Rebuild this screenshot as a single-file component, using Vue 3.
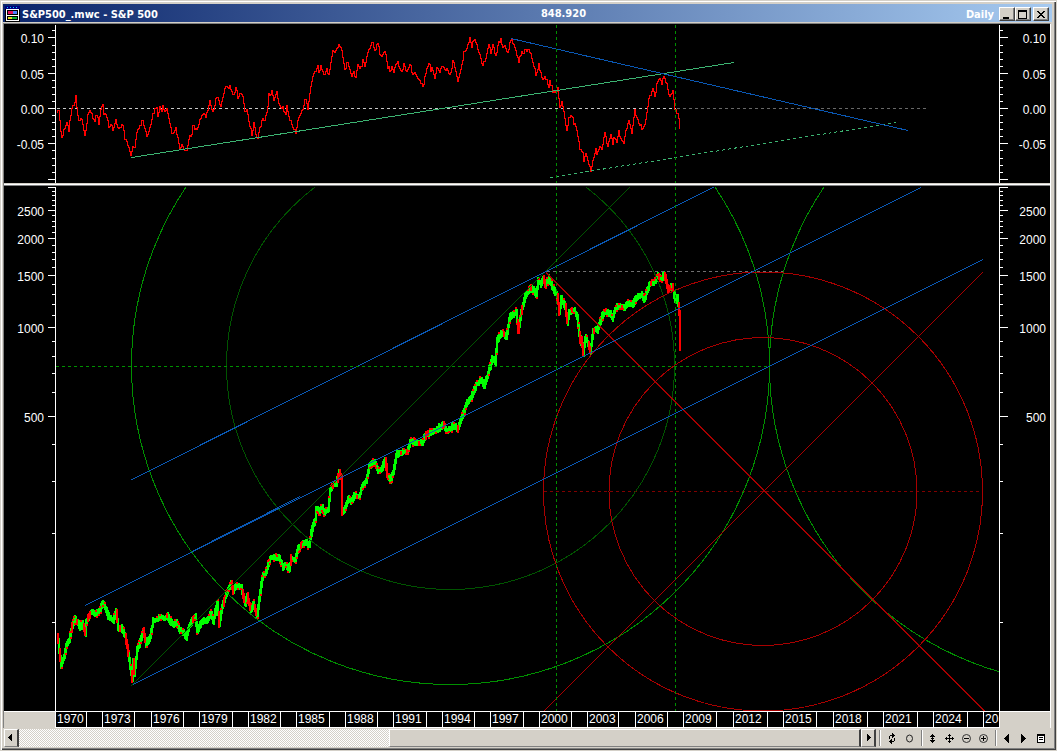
<script setup>
const toColumns = (points) => {
  const out = []
  for (let i = 0; i < points.length - 1; i++) {
    const [x0, y0] = points[i]
    const [x1, y1] = points[i + 1]
    const start = Math.round(x0)
    const count = Math.max(1, Math.round(x1) - start)
    for (let k = 0; k < count; k++) {
      out.push([start + k, y0 + ((y1 - y0) * k) / count, (y1 - y0) / count])
    }
  }
  return out
}
const decode = (text, ox, oy) =>
  text.trim().split(/\s+/).map((p) => {
    const [x, y] = p.split(',').map(Number)
    return [ox + x / 3, oy + y / 3]
  })
const noise = (n) => {
  const v = Math.sin(n * 12.9898 + 4.1) * 43758.5453
  return v - Math.floor(v)
}

const oscillatorPoints = [
  ...decode(`172,330 176,328 179,365 187,410 192,388 200,365 206,390 215,320 222,318 228,290 238,365 245,350 255,410 265,345 270,328 278,348 285,358 291,342 296,372 302,325 308,312 312,340 322,350 328,375 335,375 340,395 347,355 355,385 368,372 375,410 385,435 394,468 398,438 404,440 412,395 418,388 430,360 440,405 450,385 460,340 470,322 475,345 480,320 485,328 490,312 495,340 501,322 510,375 520,400 528,385 540,445 545,435 551,452 560,455 570,405 576,403 580,380 590,385 605,345 612,338 618,355 630,305 640,338 652,285 662,322 675,265 690,258 702,288 708,265 714,288 722,278 728,290 735,330 742,325 755,405 761,370 768,405 775,410 785,360 795,360 803,320 808,285 817,275 823,298 830,275 838,312 850,322 857,338 860,320 870,355 880,380 888,392`, 0, 0),
  ...decode(`57,350 68,325 77,290 85,325 97,240 113,195 118,212 122,198 135,225 140,208 148,222 158,155 165,160 172,140 178,128 185,145 195,205 205,185 215,228 222,215 228,235 235,190 242,205 248,178 255,198 265,155 275,125 285,150 293,130 302,172 314,148 325,200 332,212 337,195 341,212 347,188 355,188 366,218 373,195 382,210 391,190 398,220 406,218 413,240 420,240 428,260 438,215 446,183 452,208 458,205 464,232 472,202 480,212 488,195 495,212 500,202 512,222 520,183 528,210 534,247 545,195 552,155 562,140 570,115 577,138 582,117 590,135 600,165 610,198 620,160 628,132 632,158 640,128 648,170 655,135 662,117 668,145 674,140 684,162 690,120 697,120 705,145 717,182 727,155 740,148 750,152 758,185 768,220 776,195 788,242 795,228 806,255 811,238 820,270 826,278 833,262 840,325 847,305 862,388 868,355 876,342 882,370`, 280, 0),
  ...decode(`103,365 110,385 120,450 128,455 133,480 138,462 145,485 153,512 160,480 168,448 172,462 178,440 185,445 195,400 205,438 212,405 218,435 223,415 230,425 237,395 243,415 252,425 258,385 267,362 276,395 286,333 293,358 305,385 314,378 322,335 328,295 340,268 344,290 352,250 360,235 366,250 372,222 380,255 390,292 398,270 405,320 412,335 416,350 419,387`, 540, 0),
]
const oscillator = (() => {
  let d = ''
  toColumns(oscillatorPoints).forEach(([x, y], i) => {
    const py = Math.round(y + (noise(x) - 0.5) * 4)
    d += i ? `V${py + 0.5}H${x + 0.5}` : `M${x + 0.5} ${py + 0.5}`
  })
  return `${d}V129`
})()

const pricePoints = [
  ...decode(`53,285 57,300 60,330 66,375 74,345 82,310 90,300 98,255 109,232 115,245 122,262 130,242 138,280 142,240 152,218 160,212 170,218 182,205 190,182 198,200 210,232 222,236 230,210 238,265 246,258 258,285 265,320 272,375 278,415 281,360 285,400 293,325 300,310 312,270 320,312 332,285 342,240 355,235 368,228 378,232 384,225 395,245 405,250 412,245 422,270 430,270 440,290 450,255 460,240 468,228 475,270 485,245 500,240 515,215 522,240 535,188 541,252 550,195 560,160 575,128 582,150 592,135 605,140 617,190 625,165 636,208 642,188 655,225 662,150 668,110 680,90 692,50 705,48 720,52 732,80 740,72 750,88 757,50 768,55 777,22 790,10 800,0 808,12`, 40, 540),
  ...decode(`150,490 160,440 167,415 170,385 180,392 190,378 196,398 206,385 214,325 222,312 230,310 241,270 246,290 249,395 256,388 268,355 275,360 285,345 300,345 310,315 320,300 330,258 343,242 350,252 358,270 368,260 378,235 384,280 393,298 403,275 410,222 420,215 445,210 452,182 470,185 490,185 500,160 515,152 530,150 545,134`, 260, 380),
  ...decode(`12,548 22,570 35,562 42,550 55,566 68,525 82,490 95,470 110,430 125,415 135,435 150,385 160,350 168,365 175,300 187,275 200,288 212,225 222,220 230,212 238,270 245,210 258,165 275,140 290,162 298,120 306,130 312,110 318,132 330,112 345,150 355,165 360,215 367,172 378,195 383,245 390,212 405,208 415,230 422,305 426,290 432,340 438,290 448,310 454,335 462,268 475,265 490,225 495,212 510,217 520,230 535,195 555,200 565,187 578,190 590,170 605,162 615,175 630,130 645,125 658,103 665,115 675,100 688,148 700,134 708,180 715,167 719,215 722,320`, 440, 240),
]
const price = (() => {
  let up = ''
  let down = ''
  toColumns(pricePoints).forEach(([x, y, step]) => {
    const pad = 2 + Math.round(noise(x * 2 + 1) * 3)
    const top = Math.round(Math.min(y, y + step) - pad / 2 + (noise(x * 3) - 0.5) * 2)
    const height = Math.round(Math.abs(step)) + pad + 2
    const falling = step > 3 ? noise(x + 9) > 0.35 : noise(x + 5) > 0.95
    if (x >= 679 || step > 12 || falling) {
      down += `M${x} ${top}v${height}`
    } else {
      up += `M${x} ${top}v${height}`
      if (noise(x + 20) > 0.6) down += `M${x} ${top + (noise(x) > 0.5 ? height - 1 : -1)}v2`
    }
  })
  return { up, down }
})()

const upperMajor = [[37, '0.10'], [73, '0.05'], [108, '0.00'], [143, '-0.05'], [179, '']]
const upperMinor = [30, 45, 52, 59, 66, 80, 87, 94, 101, 115, 122, 129, 136, 150, 158, 165, 172]
const lowerMajor = [[187, ''], [210, '2500'], [238, '2000'], [275, '1500'], [327, '1000'], [416, '500']]
const lowerMinor = [191, 195, 200, 205, 215, 221, 226, 232, 245, 252, 259, 267, 284, 294, 304, 315, 341, 356, 373, 392, 444, 481, 533, 622]
const ticks = (major, minor) =>
  major.map(([y]) => `M48 ${y + 0.5}H55M1000 ${y + 0.5}H1008`).join('') +
  minor.map((y) => `M52 ${y + 0.5}H55M1000 ${y + 0.5}H1003`).join('')
const upperTicks = ticks(upperMajor, upperMinor)
const lowerTicks = ticks(lowerMajor, lowerMinor)

const stops = [55, 86, 102, 134, 151, 183, 199, 232, 248, 280, 296, 329, 345, 377, 393, 426, 442, 474, 490, 523, 539, 571, 587, 618, 635, 667, 683, 716, 733, 767, 783, 816, 833, 867, 883, 917, 933, 967, 983, 999]
const years = stops.slice(0, -1).map((x, i) => ({
  label: i % 2 ? '' : i === 38 ? '20' : String(1970 + (i / 2) * 3),
}))
const yearColumns = [51, ...stops.slice(1).map((x, i) => x - stops[i]), 51].map((w) => `minmax(0, ${w}fr)`).join(' ')
</script>

<template>
  <main class="window">
    <header class="titlebar">
      <svg class="app-icon" viewBox="0 0 15 16" shape-rendering="crispEdges" aria-hidden="true">
        <path fill="#000" d="M0 3h15v13H0z" />
        <path fill="#000080" d="M0 0h15v3H0z" />
        <path fill="#00c8ff" d="M2 1h1v1H2zM5 1h1v1H5zM8 1h1v1H8zM11 1h1v1h-1z" />
        <path fill="#fff" d="M1 3h13v12H1z" />
        <path fill="#000" d="M2 4h11v10H2z" />
        <path fill="#e0105c" d="M3 5h5v3H3z" />
        <path fill="#5080ff" d="M8 5h4v3H8z" />
        <path fill="#fff" d="M2 9h11v1H2z" />
        <path fill="#e8e020" d="M3 11h4v2H3z" />
        <path fill="#10b030" d="M7 11h5v2H7z" />
      </svg>
      <h1 class="title">S&amp;P500_.mwc - S&amp;P 500</h1>
      <span class="quote">848.920</span>
      <span class="period">Daily</span>
      <div class="controls">
        <button class="win-button" aria-label="Minimize">
          <svg viewBox="0 0 12 10" shape-rendering="crispEdges"><path d="M2 8h6v2H2z" /></svg>
        </button>
        <button class="win-button" aria-label="Maximize">
          <svg viewBox="0 0 12 10" shape-rendering="crispEdges"><path fill-rule="evenodd" d="M1 1h9v9H1zM2 3v6h7V3z" /></svg>
        </button>
        <button class="win-button close" aria-label="Close">
          <svg viewBox="0 0 12 10" shape-rendering="crispEdges"><path d="M2 2h2v1h1v1h2V3h1V2h2v1H9v1H8v1H7v1h1v1h1v1h1v1H8V8H7V7H5v1H4v1H2V8h1V7h1V6h1V5H4V4H3V3H2z" /></svg>
        </button>
      </div>
    </header>

    <section class="charts">
      <svg class="chart" viewBox="4 24 1046 159" role="img" aria-label="Oscillator">
        <g class="lines">
          <path class="zero" d="M57 108.5H676" />
          <path class="zero far" d="M677 108.5H927" />
          <path class="price-down" :d="oscillator" />
          <path class="sea" d="M131.5 157.5L734 62.5" />
          <path class="sea dashed" d="M550 177.5L896 122.5" />
          <path class="blue" d="M511 38.5L908 130.5" />
          <path class="green dashed" d="M556.5 25V183M675.5 25V183" />
          <path class="axis" d="M55.5 25V183M999.5 25V183" />
          <path class="axis" :d="upperTicks" />
        </g>
        <g v-for="[y, label] in upperMajor" :key="y" class="labels">
          <text x="44" :y="y + 6">{{ label }}</text>
          <text x="1046" :y="y + 6">{{ label }}</text>
        </g>
      </svg>
      <div class="splitter"></div>
      <svg class="chart" viewBox="4 186 1046 525" role="img" aria-label="Price history">
        <defs>
          <clipPath id="plot"><rect x="56" y="187" width="943" height="524" /></clipPath>
        </defs>
        <g class="lines" clip-path="url(#plot)">
          <path class="price-up" :d="price.up" />
          <path class="price-bar-down" :d="price.down" />
          <path class="gray dashed" d="M547 271.5H787" />
          <path class="maroon dashed" d="M544 491.5H983" />
          <circle class="green" cx="450.5" cy="365.5" r="319" />
          <circle class="green" cx="1088.5" cy="365.5" r="319" />
          <circle class="forest" cx="450.5" cy="365.5" r="224" />
          <circle class="red" cx="763" cy="491.5" r="219.5" />
          <circle class="red" cx="763" cy="491.5" r="154" />
          <path class="forest" d="M131 686L631 186" />
          <path class="red" d="M546 272.500L984.500 711M544 711L983 272" />
          <path class="blue" d="M131 480L714 187M85 605.5L921 187.5M192 551.5L300 496.5M133 684.5L983 259.5" />
          <path class="green dashed" d="M56 366.5H770M556.5 187V711M675.5 187V711" />
        </g>
        <g class="lines">
          <path class="axis" d="M55.5 187V711M999.5 187V711" />
          <path class="axis" :d="lowerTicks" />
        </g>
        <g v-for="[y, label] in lowerMajor" :key="y" class="labels">
          <text x="44" :y="y + 6">{{ label }}</text>
          <text x="1046" :y="y + 6">{{ label }}</text>
        </g>
      </svg>
      <div class="dates" :style="{ gridTemplateColumns: yearColumns }">
        <span class="corner"></span>
        <span v-for="(year, i) in years" :key="i" class="year">{{ year.label }}</span>
        <span class="corner right"></span>
      </div>
    </section>

    <footer class="bottom">
      <button class="scroll-button" aria-label="Scroll left">
        <svg viewBox="0 0 12 14" shape-rendering="crispEdges"><path d="M3 6h1V5h1V4h1V3h1v7H6V9H5V8H4V7H3z" /></svg>
      </button>
      <div class="track">
        <button class="thumb" aria-label="Scroll position"></button>
      </div>
      <button class="scroll-button" aria-label="Scroll right">
        <svg viewBox="0 0 12 14" shape-rendering="crispEdges"><path d="M5 3h1v1h1v1h1v1h1v1H8v1H7v1H6v1H5z" /></svg>
      </button>
      <div class="tools">
        <button class="tool wide" aria-label="Refresh">
          <svg viewBox="0 0 11 11" shape-rendering="crispEdges"><path d="M6 0h1v1h1v1h1v1H8v1H7v1H6V3H4v3H3V3h1V2h2zM8 5h1v3H8v1H6v2H5v-1H4V9H3V8h1V7h1V6h1v2h2z" /></svg>
        </button>
        <button class="tool wide" aria-label="Circle">
          <svg viewBox="0 0 11 11"><ellipse cx="5.5" cy="5.5" rx="3" ry="3.5" fill="none" stroke="#222" /></svg>
        </button>
      </div>
      <div class="tools">
        <button class="tool" aria-label="Fit vertically">
          <svg viewBox="0 0 11 11" shape-rendering="crispEdges"><path d="M5 1h1v1h1v1h1v1H6v3h2v1H7v1H6v1H5V9H4V8H3V7h2V4H3V3h1V2h1zM4 5h3v1H4z" /></svg>
        </button>
        <button class="tool" aria-label="Pan">
          <svg viewBox="0 0 11 11" shape-rendering="crispEdges"><path d="M5 1h1v1h1v1H6v2h2V4h1v1h1v1H9v1H8V6H6v2h1v1H6v1H5V9H4V8h1V6H3v1H2V6H1V5h1V4h1v1h2V3H4V2h1z" /></svg>
        </button>
        <button class="tool" aria-label="Zoom out">
          <svg viewBox="0 0 11 11"><circle cx="5.5" cy="5.5" r="4" /><path d="M3 5h5v1H3z" /></svg>
        </button>
        <button class="tool" aria-label="Zoom in">
          <svg viewBox="0 0 11 11"><circle cx="5.5" cy="5.5" r="4" /><path d="M3 5h5v1H3zM5 3h1v5H5z" /></svg>
        </button>
      </div>
      <div class="tools last">
        <button class="tool" aria-label="Previous">
          <svg viewBox="0 0 11 11" shape-rendering="crispEdges"><path d="M3 5h1V4h1V3h1V2h1V1h1v9H7V9H6V8H5V7H4V6H3z" /></svg>
        </button>
        <button class="tool" aria-label="Next">
          <svg viewBox="0 0 11 11" shape-rendering="crispEdges"><path d="M3 1h1v1h1v1h1v1h1v1h1v1H7v1H6v1H5v1H4v1H3z" /></svg>
        </button>
        <button class="tool" aria-label="List">
          <svg viewBox="0 0 11 11" shape-rendering="crispEdges"><path d="M2 1h8v9H2z" /><path fill="#fff" d="M3 3h6v6H3z" /><path d="M4 4h4v1H4zM4 6h4v1H4z" /></svg>
        </button>
      </div>
    </footer>
  </main>
</template>

<style>
body {
  margin: 0;
  background: #fff;
}
</style>

<style scoped>
.window {
  box-sizing: border-box;
  background: #d4d0c8;
  padding: 3px 3px 3px 2px;
  border: 1px solid #d4d0c8;
  box-shadow: inset 1px 1px 0 #fff, inset -1px -1px 0 #404040, inset -2px -2px 0 #808080;
  font-family: "Liberation Sans", Arial, sans-serif;
  font-size: 12px;
}
button {
  box-sizing: border-box;
  padding: 0;
  margin: 0;
  border: 0;
  background: #d4d0c8;
  display: flex;
  align-items: center;
  justify-content: center;
}
.titlebar {
  display: grid;
  grid-template-columns: auto 1fr auto auto;
  align-items: center;
  height: 18px;
  margin-right: 1px;
  padding: 0 3px 0 2px;
  position: relative;
  color: #fff;
  background: linear-gradient(90deg, #0a246a, #a6caf0);
  font: bold 11px/18px "DejaVu Sans Condensed", "DejaVu Sans", sans-serif;
}
.app-icon {
  width: 15px;
  height: 16px;
  margin-right: 2px;
}
.title {
  margin: 0;
  padding-top: 2px;
  font: inherit;
}
.quote {
  position: absolute;
  left: 0;
  right: 0;
  top: 1px;
  text-align: center;
  padding-left: 72px;
}
.period {
  margin-right: 5px;
  padding-top: 2px;
}
.controls {
  display: flex;
  position: relative;
}
.win-button {
  width: 16px;
  height: 14px;
  border: 1px solid;
  border-color: #fff #404040 #404040 #fff;
  box-shadow: inset -1px -1px 0 #808080;
}
.win-button svg {
  width: 12px;
  height: 10px;
}
.close {
  margin-left: 2px;
}
.charts {
  margin-top: 1px;
  margin-right: 2px;
  border: solid;
  border-width: 1px 1px 0;
  border-color: #808080 #fff #fff #808080;
}
.chart {
  display: block;
  width: 100%;
  height: auto;
  background: #000;
}
.lines {
  fill: none;
  stroke-width: 1;
  shape-rendering: crispEdges;
}
.dashed,
.zero {
  stroke-dasharray: 3 3;
}
.zero { stroke: #c8c8c8; }
.far { stroke: #686868; }
.sea { stroke: #3cb371; }
.blue { stroke: #0a58b4; }
.green { stroke: #009000; }
.forest { stroke: #005400; }
.red { stroke: #a80000; }
.maroon { stroke: #800000; }
.gray { stroke: #707070; }
.axis { stroke: #fff; }
.price-down { stroke: #f00; }
.price-up { stroke: #0f0; stroke-width: 2; }
.price-bar-down { stroke: #f00; stroke-width: 2; }
.labels {
  fill: #fff;
  text-anchor: end;
  font-size: 12px;
}
.splitter {
  height: 1px;
  background: #fff;
  border-top: 1px solid #d4d0c8;
  border-bottom: 1px solid #808080;
}
.dates {
  display: grid;
  height: 17px;
  margin-bottom: 1px;
}
.year {
  box-sizing: border-box;
  background: #000;
  color: #fff;
  border: solid #fff;
  border-width: 1px 0 1px 1px;
  padding-left: 1px;
  font-size: 12px;
  line-height: 15px;
  overflow: hidden;
  white-space: nowrap;
}
.corner {
  border-top: 1px solid #fff;
  background: #d4d0c8;
}
.right {
  border-left: 1px solid #fff;
}
.bottom {
  display: flex;
  align-items: center;
  height: 18px;
  margin-left: 1px;
}
.scroll-button {
  width: 15px;
  height: 18px;
  border: solid;
  border-width: 1px 2px 1px 1px;
  border-color: #fff #404040 #808080 #fff;
}
.scroll-button svg {
  width: 12px;
  height: 14px;
}
.track {
  flex: 1;
  height: 18px;
  display: flex;
  justify-content: flex-end;
  background: repeating-conic-gradient(#fff 0 25%, #d4d0c8 0 50%) 0 0 / 2px 2px;
}
.thumb {
  width: 56%;
  height: 18px;
  border: solid;
  border-width: 1px 2px 1px 1px;
  border-color: #fff #404040 #808080 #fff;
}
.tools {
  display: flex;
  align-items: center;
  margin-left: 3px;
  height: 16px;
  border-left: 1px solid #808080;
  box-shadow: inset 1px 0 0 #fff;
  padding-left: 2px;
}
.tool {
  width: 17px;
  height: 16px;
  background: transparent;
}
.wide {
  width: 18px;
}
.tool svg {
  width: 11px;
  height: 11px;
}
.tool circle {
  fill: none;
  stroke: #333;
}
.last {
  padding-right: 4px;
}
</style>
